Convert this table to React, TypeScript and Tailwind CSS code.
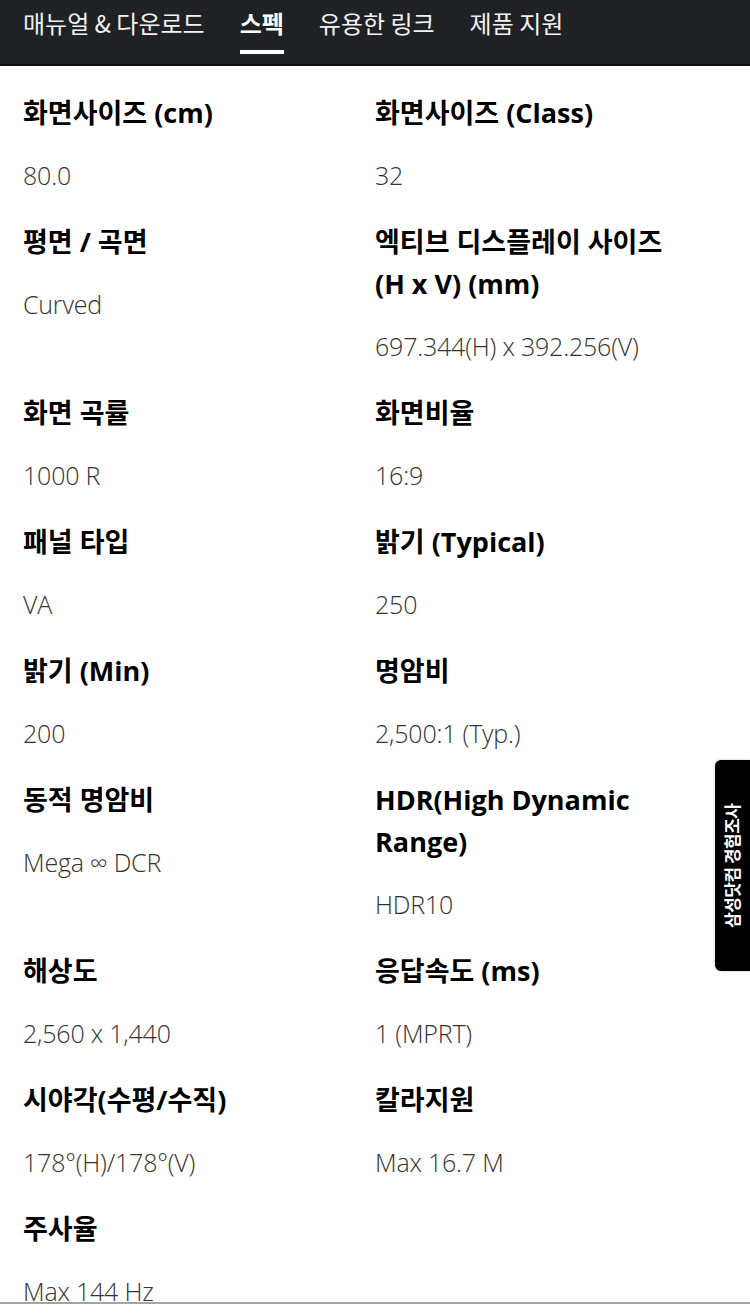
import React from 'react'

type Spec = { label: string[]; value: string }

const ROWS: [Spec, Spec | null][] = [
  [{ label: ['화면사이즈 (cm)'], value: '80.0' }, { label: ['화면사이즈 (Class)'], value: '32' }],
  [{ label: ['평면 / 곡면'], value: 'Curved' }, { label: ['엑티브 디스플레이 사이즈', '(H x V) (mm)'], value: '697.344(H) x 392.256(V)' }],
  [{ label: ['화면 곡률'], value: '1000 R' }, { label: ['화면비율'], value: '16:9' }],
  [{ label: ['패널 타입'], value: 'VA' }, { label: ['밝기 (Typical)'], value: '250' }],
  [{ label: ['밝기 (Min)'], value: '200' }, { label: ['명암비'], value: '2,500:1 (Typ.)' }],
  [{ label: ['동적 명암비'], value: 'Mega ∞ DCR' }, { label: ['HDR(High Dynamic', 'Range)'], value: 'HDR10' }],
  [{ label: ['해상도'], value: '2,560 x 1,440' }, { label: ['응답속도 (ms)'], value: '1 (MPRT)' }],
  [{ label: ['시야각(수평/수직)'], value: '178°(H)/178°(V)' }, { label: ['칼라지원'], value: 'Max 16.7 M' }],
  [{ label: ['주사율'], value: 'Max 144 Hz' }, null],
]

const TABS = ['매뉴얼 & 다운로드', '스펙', '유용한 링크', '제품 지원']

const FONT = { fontFamily: '"Open Sans", "Noto Sans CJK KR", sans-serif' }
const KR = { fontFamily: '"Noto Sans CJK KR", "Noto Sans", sans-serif' }

function SpecItem({ spec }: { spec: Spec | null }) {
  if (!spec) return <div />
  return (
    <div className="pb-[28px] pr-4">
      {spec.label.map(l => (
        <div key={l} className="text-[27px] font-bold leading-[42px] text-black whitespace-nowrap" style={FONT}>
          {l}
        </div>
      ))}
      <div className="mt-[23px] text-[25px] font-light leading-[36px] text-[#333] tracking-[-0.2px]" style={FONT}>
        {spec.value}
      </div>
    </div>
  )
}

export default function App() {
  return (
    <div className="relative h-[1313px] w-[750px] overflow-hidden bg-white">
      {/* Tabs */}
      <div className="h-[66px] bg-[#202124] border-b-2 border-[#0c0c0c] flex items-start gap-[35px] pl-[23px] pt-[5px]" style={KR}>
        {TABS.map(t => (
          <div key={t} className="relative">
            <span className={`text-[24px] leading-[36px] ${t === '스펙' ? 'font-bold text-white' : 'font-normal text-[#f2f2f2]'}`}>
              {t}
            </span>
            {t === '스펙' && <div className="absolute left-0 right-0 top-[45px] h-[4px] bg-white" />}
          </div>
        ))}
      </div>

      {/* Specs */}
      <div className="grid grid-cols-[352px_1fr] pl-[23px] pt-[26px]">
        {ROWS.map((r, i) => (
          <React.Fragment key={i}>
            <SpecItem spec={r[0]} />
            <SpecItem spec={r[1]} />
          </React.Fragment>
        ))}
      </div>

      {/* side survey tab */}
      <div className="absolute right-0 top-[760px] w-[35px] h-[211px] bg-black rounded-l-[6px] shadow-[0_0_3px_rgba(0,0,0,0.25)] flex items-center justify-center">
        <span className="-rotate-90 whitespace-nowrap text-white text-[17px] font-bold tracking-[-0.5px]" style={KR}>
          삼성닷컴 경험조사
        </span>
      </div>

      {/* bottom edge */}
      <div className="absolute left-0 right-0 top-[1302px] h-[11px] bg-white border-t-2 border-[#a3a3a3]" />
    </div>
  )
}
